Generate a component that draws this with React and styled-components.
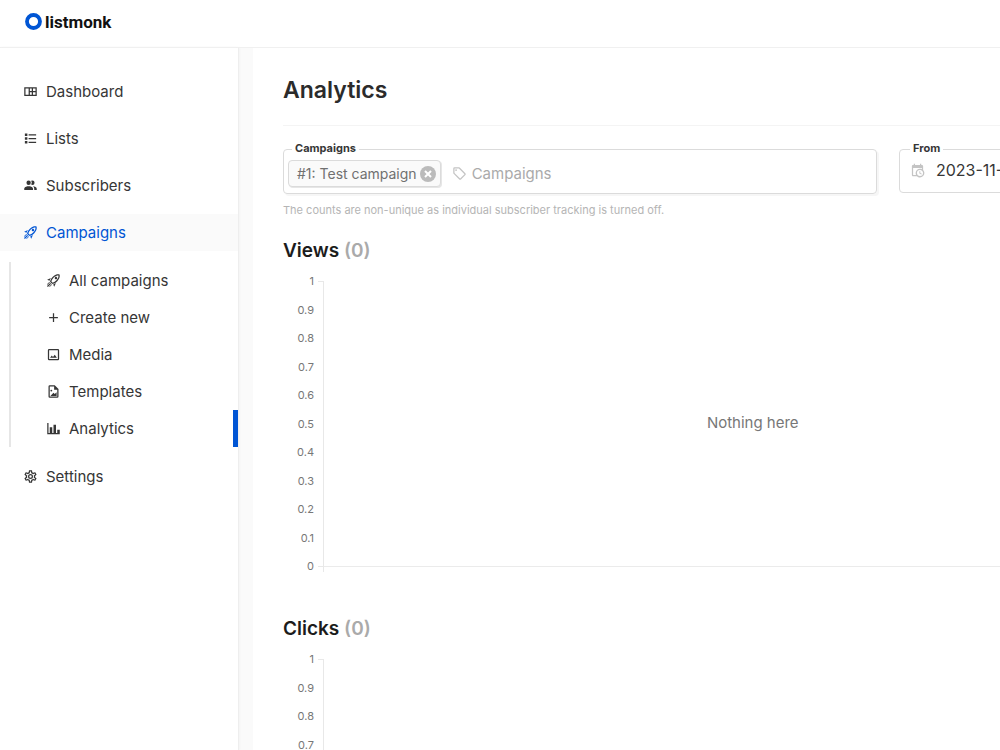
import styled, { createGlobalStyle, css } from "styled-components";

const icons = {
  dashboard:
    "M2 5V19H22V5H2M4 7H9V17H4V7M11 7H14V11H11V7M16 7H20V11H16V7M11 13H14V17H11V13M16 13H20V17H16V13Z",
  list: "M3,4H7V8H3V4M9,5V7H21V5H9M3,10H7V14H3V10M9,11V13H21V11H9M3,16H7V20H3V16M9,17V19H21V17H9",
  users:
    "M16 17V19H2V17S2 13 9 13 16 17 16 17M12.5 7.5A3.5 3.5 0 1 0 9 11A3.5 3.5 0 0 0 12.5 7.5M15.94 13A5.32 5.32 0 0 1 18 17V19H22V17S22 13.37 15.94 13M15 4A3.39 3.39 0 0 0 13.07 4.59A5 5 0 0 1 13.07 10.41A3.39 3.39 0 0 0 15 11A3.5 3.5 0 0 0 15 4Z",
  rocket:
    "M13.13 22.19L11.5 18.36C13.07 17.78 14.54 17 15.9 16.09L13.13 22.19M5.64 12.5L1.81 10.87L7.91 8.1C7 9.46 6.22 10.93 5.64 12.5M19.22 4C19.5 4 19.75 4 19.96 4.05C20.13 5.44 19.94 8.3 16.66 11.58C14.96 13.29 12.93 14.6 10.65 15.47L8.5 13.37C9.42 11.06 10.73 9.03 12.42 7.34C15.18 4.58 17.64 4 19.22 4M19.22 2C17.24 2 14.24 2.69 11 5.93C8.81 8.12 7.5 10.53 6.65 12.64C6.37 13.39 6.56 14.21 7.11 14.77L9.24 16.89C9.62 17.27 10.13 17.5 10.66 17.5C10.89 17.5 11.13 17.44 11.36 17.35C13.5 16.53 15.88 15.19 18.07 13C23.73 7.34 21.61 2.39 21.61 2.39S20.7 2 19.22 2M14.54 9.46C13.76 8.68 13.76 7.41 14.54 6.63S16.59 5.85 17.37 6.63C18.14 7.41 18.15 8.68 17.37 9.46C16.59 10.24 15.32 10.24 14.54 9.46M6.24 22L9.88 18.36C9.54 18.27 9.21 18.12 8.91 17.91L4.83 22H6.24M2 22H3.41L8.18 17.24L6.76 15.83L2 20.59V22M2 19.17L6.09 15.09C5.88 14.79 5.73 14.47 5.64 14.12L2 17.76V19.17Z",
  plus: "M19,13H13V19H11V13H5V11H11V5H13V11H19V13Z",
  image:
    "M19,19H5V5H19M19,3H5A2,2 0 0,0 3,5V19A2,2 0 0,0 5,21H19A2,2 0 0,0 21,19V5A2,2 0 0,0 19,3M13.96,12.29L11.21,15.83L9.25,13.47L6.5,17H17.5L13.96,12.29Z",
  file: "M14,2L20,8V20A2,2 0 0,1 18,22H6A2,2 0 0,1 4,20V4A2,2 0 0,1 6,2H14M18,20V9H13V4H6V20H18M17,13V19H7L12,14L14,16M10,10.5A1.5,1.5 0 0,1 8.5,12A1.5,1.5 0 0,1 7,10.5A1.5,1.5 0 0,1 8.5,9A1.5,1.5 0 0,1 10,10.5Z",
  chart: "M22,21H2V3H4V19H6V10H10V19H12V6H16V19H18V14H22V21Z",
  cog: "M12,8A4,4 0 0,1 16,12A4,4 0 0,1 12,16A4,4 0 0,1 8,12A4,4 0 0,1 12,8M12,10A2,2 0 0,0 10,12A2,2 0 0,0 12,14A2,2 0 0,0 14,12A2,2 0 0,0 12,10M10,22C9.75,22 9.54,21.82 9.5,21.58L9.13,18.93C8.5,18.68 7.96,18.34 7.44,17.94L4.95,18.95C4.73,19.03 4.46,18.95 4.34,18.73L2.34,15.27C2.21,15.05 2.27,14.78 2.46,14.63L4.57,12.97L4.5,12L4.57,11L2.46,9.37C2.27,9.22 2.21,8.95 2.34,8.73L4.34,5.27C4.46,5.05 4.73,4.96 4.95,5.05L7.44,6.05C7.96,5.66 8.5,5.32 9.13,5.07L9.5,2.42C9.54,2.18 9.75,2 10,2H14C14.25,2 14.46,2.18 14.5,2.42L14.87,5.07C15.5,5.32 16.04,5.66 16.56,6.05L19.05,5.05C19.27,4.96 19.54,5.05 19.66,5.27L21.66,8.73C21.79,8.95 21.73,9.22 21.54,9.37L19.43,11L19.5,12L19.43,13L21.54,14.63C21.73,14.78 21.79,15.05 21.66,15.27L19.66,18.73C19.54,18.95 19.27,19.04 19.05,18.95L16.56,17.95C16.04,18.34 15.5,18.68 14.87,18.93L14.5,21.58C14.46,21.82 14.25,22 14,22H10M11.25,4L10.88,6.61C9.68,6.86 8.62,7.5 7.85,8.39L5.44,7.35L4.69,8.65L6.8,10.2C6.4,11.37 6.4,12.64 6.8,13.8L4.68,15.36L5.43,16.66L7.86,15.62C8.63,16.5 9.68,17.14 10.87,17.38L11.24,20H12.76L13.13,17.39C14.32,17.14 15.37,16.5 16.14,15.62L18.57,16.66L19.32,15.36L17.2,13.81C17.6,12.64 17.6,11.37 17.2,10.2L19.31,8.65L18.56,7.35L16.15,8.39C15.38,7.5 14.32,6.86 13.12,6.62L12.75,4H11.25Z",
  tag: "M21.41 11.58L12.41 2.58A2 2 0 0 0 11 2H4A2 2 0 0 0 2 4V11A2 2 0 0 0 2.59 12.42L11.59 21.42A2 2 0 0 0 13 22A2 2 0 0 0 14.41 21.41L21.41 14.41A2 2 0 0 0 22 13A2 2 0 0 0 21.41 11.58M13 20L4 11V4H11L20 13M6.5 5A1.5 1.5 0 1 1 5 6.5A1.5 1.5 0 0 1 6.5 5Z",
  calendar:
    "M15,13H16.5V15.82L18.94,17.23L18.19,18.53L15,16.69V13M19,8H5V19H9.67C9.24,18.09 9,17.07 9,16A7,7 0 0,1 16,9C17.07,9 18.09,9.24 19,9.67V8M5,21C3.89,21 3,20.1 3,19V5C3,3.89 3.89,3 5,3H6V1H8V3H16V1H18V3H19A2,2 0 0,1 21,5V11.1C22.24,12.36 23,14.09 23,16A7,7 0 0,1 16,23C14.09,23 12.36,22.24 11.1,21H5M16,11.15A4.85,4.85 0 0,0 11.15,16C11.15,18.68 13.32,20.85 16,20.85A4.85,4.85 0 0,0 20.85,16C20.85,13.32 18.68,11.15 16,11.15Z",
};

const GlobalStyle = createGlobalStyle`
  * {
    box-sizing: border-box;
  }
  body {
    margin: 0;
    background: #fff;
    color: #363636;
    font-family: Inter, "Liberation Sans", sans-serif;
    font-size: 15px;
  }
`;

const Page = styled.div`
  height: 100vh;
  display: flex;
  flex-direction: column;
  overflow: hidden;
`;

const Header = styled.header`
  flex: none;
  height: 48px;
  padding: 0 25px 4px;
  display: flex;
  align-items: center;
  border-bottom: 1px solid #f0f0f0;
  box-shadow: 0 0 3px #eee;
`;

const Logo = styled.a`
  display: flex;
  align-items: center;
  gap: 3px;
  color: #111;
  font-family: Roboto, "Open Sans", sans-serif;
  font-size: 17px;
  font-weight: 700;
  line-height: 20px;
  text-decoration: none;
`;

const Body = styled.div`
  flex: 1;
  min-height: 0;
  display: flex;
  background: #fafafa;
`;

const Sidebar = styled.nav`
  flex: none;
  width: 239px;
  padding-top: 25px;
  background: #fff;
  border-right: 1px solid #eee;
  box-shadow: 0 0 3px #eee;
`;

const Menu = styled.ul`
  margin: 0;
  padding: 0;
  list-style: none;
  display: flex;
  flex-direction: column;
  gap: 10px;
`;

const SubMenu = styled.ul`
  margin: 11px 0 1px 9px;
  padding: 0;
  list-style: none;
  border-left: 2px solid #e6e6e6;
`;

const MenuLink = styled.a`
  height: 37px;
  padding: 0 23px;
  display: flex;
  align-items: center;
  gap: 8px;
  color: #363636;
  line-height: 20px;
  text-decoration: none;

  ${(p) =>
    p.$open &&
    css`
      color: #0055d4;
      background: #fafafa;
    `}
`;

const SubLink = styled(MenuLink)`
  padding: 0 35px;
  border-right: 5px solid ${(p) => (p.$current ? "#0055d4" : "transparent")};
`;

const Main = styled.main`
  flex: 1;
  min-width: 0;
  margin-left: 14px;
  padding: 26px 30px 0;
  background: #fff;
  overflow: auto;
  scrollbar-width: none;
`;

/* the report keeps its width and scrolls sideways in a narrow window */
const Report = styled.div`
  min-width: 1210px;
`;

const Title = styled.h1`
  margin: 0;
  padding-bottom: 19px;
  border-bottom: 1px solid #f4f4f4;
  color: #2b2b2b;
  font-size: 23px;
  font-weight: 600;
  line-height: 32px;
`;

const Filters = styled.form`
  margin-top: 15px;
  display: grid;
  grid-template-columns: 1fr 1fr;
  column-gap: 22px;
`;

const Field = styled.fieldset`
  min-width: 0;
  height: ${(p) => (p.$raised ? 53 : 52)}px;
  margin: 0;
  padding: 0 ${(p) => (p.$raised ? 4 : 10)}px;
  border: 1px solid #dbdbdb;
  border-radius: 4px;
  box-shadow: ${(p) => (p.$raised ? "2px 2px 0 #f6f6f6" : "none")};
`;

const Legend = styled.legend`
  margin-left: ${(p) => p.$indent}px;
  padding: 0 3px 2px;
  font-size: 11px;
  font-weight: 700;
  line-height: 14px;
`;

const FieldRow = styled.div`
  padding-top: 3px;
  display: flex;
  align-items: center;
  color: #c4c4c4;
`;

const Tag = styled.span`
  height: 27px;
  margin-right: 11px;
  padding: 0 4px 0 8px;
  display: flex;
  align-items: center;
  gap: 3px;
  border: 1px solid #dbdbdb;
  border-radius: 4px;
  background: #fafafa;
  box-shadow: 1px 1px 0 #e6e6e6;
  color: #707070;
  font-size: 14px;
`;

const TagClose = styled.button`
  width: 16px;
  height: 16px;
  padding: 0;
  border: 0;
  border-radius: 50%;
  display: flex;
  align-items: center;
  justify-content: center;
  background: #bbb;
  color: #fff;
  cursor: pointer;
`;

const TextInput = styled.input`
  flex: 1;
  min-width: 0;
  margin-left: 5px;
  padding: 0;
  border: 0;
  outline: 0;
  background: none;
  color: #363636;
  font: inherit;
  font-size: 15px;
  line-height: 20px;

  &::placeholder {
    color: #aaa;
    opacity: 1;
  }
`;

const DateInput = styled(TextInput)`
  margin-left: 11px;
  font-size: 16px;
`;

const Help = styled.p`
  margin: 8px 0 0;
  color: #b5b5b5;
  font-size: 11px;
  line-height: 16px;
`;

const Section = styled.section`
  margin-top: ${(p) => p.$top}px;
  display: grid;
  grid-template-columns: 3fr 1fr;
  column-gap: 12px;
`;

const SectionTitle = styled.h2`
  margin: 0;
  grid-column: 1 / -1;
  color: #1c1c1c;
  font-size: 19px;
  font-weight: 600;
  line-height: 28px;

  span {
    color: #aaa;
  }
`;

const Chart = styled.div`
  display: flex;
  margin-top: 9px;
`;

const Axis = styled.ol`
  width: 31px;
  margin: 0;
  padding: 0;
  list-style: none;
  display: flex;
  flex-direction: column;
  justify-content: space-between;
  height: 299px;
  color: #777;
  font-size: 11px;
  line-height: 14px;
  text-align: right;
`;

const Plot = styled.div`
  flex: 1;
  display: grid;
  grid-template-columns: 6px 1fr;
  grid-template-rows: 286px 5px;
  margin: 7px 0 7px 4px;
`;

const Ticks = styled.div`
  border: 1px solid #e8e8e8;
  border-left: 0;
`;

const Area = styled.div`
  padding-bottom: 2px;
  display: flex;
  align-items: center;
  justify-content: center;
  border-bottom: 1px solid #ebebeb;
  color: #777;
`;

const AxisEnd = styled.div`
  border-right: 1px solid #e8e8e8;
`;

const Icon = ({ name, size = 15 }) => (
  <svg width={size} height={size} viewBox="0 0 24 24" fill="currentColor" aria-hidden="true">
    <path d={icons[name]} fillRule={name === "dashboard" ? "evenodd" : "nonzero"} />
  </svg>
);

const campaignLinks = [
  { icon: "rocket", label: "All campaigns" },
  { icon: "plus", label: "Create new" },
  { icon: "image", label: "Media" },
  { icon: "file", label: "Templates" },
  { icon: "chart", label: "Analytics", current: true },
];

const links = [
  { icon: "dashboard", label: "Dashboard" },
  { icon: "list", label: "Lists" },
  { icon: "users", label: "Subscribers" },
  { icon: "rocket", label: "Campaigns", children: campaignLinks },
  { icon: "cog", label: "Settings" },
];

const steps = ["1", "0.9", "0.8", "0.7", "0.6", "0.5", "0.4", "0.3", "0.2", "0.1", "0"];

const EmptyChart = ({ title, note, top }) => (
  <Section $top={top}>
    <SectionTitle>
      {title} <span>(0)</span>
    </SectionTitle>
    <Chart>
      <Axis>
        {steps.map((s) => (
          <li key={s}>{s}</li>
        ))}
      </Axis>
      <Plot>
        <Ticks />
        <Area>{note}</Area>
        <AxisEnd />
      </Plot>
    </Chart>
  </Section>
);

const App = () => {
  return (
    <Page>
      <GlobalStyle />
      <Header>
        <Logo href="#">
          <svg width="17" height="17" viewBox="0 0 17 17" aria-hidden="true">
            <circle cx="8.5" cy="8.5" r="6.5" fill="none" stroke="#0055d4" strokeWidth="3.8" />
          </svg>
          listmonk
        </Logo>
      </Header>
      <Body>
        <Sidebar>
          <Menu>
            {links.map((link) => (
              <li key={link.label}>
                <MenuLink href="#" $open={!!link.children}>
                  <Icon name={link.icon} />
                  {link.label}
                </MenuLink>
                {link.children && (
                  <SubMenu>
                    {link.children.map((sub) => (
                      <li key={sub.label}>
                        <SubLink href="#" $current={sub.current}>
                          <Icon name={sub.icon} />
                          {sub.label}
                        </SubLink>
                      </li>
                    ))}
                  </SubMenu>
                )}
              </li>
            ))}
          </Menu>
        </Sidebar>
        <Main>
          <Report>
            <Title>Analytics</Title>
            <Filters>
              <div>
                <Field $raised>
                  <Legend $indent={4}>
                    <label htmlFor="campaigns">Campaigns</label>
                  </Legend>
                  <FieldRow>
                    <Tag>
                      #1: Test campaign
                      <TagClose type="button" aria-label="Remove">
                        <svg width="8" height="8" viewBox="0 0 8 8" aria-hidden="true">
                          <path d="M1 1L7 7M7 1L1 7" stroke="currentColor" strokeWidth="2" />
                        </svg>
                      </TagClose>
                    </Tag>
                    <Icon name="tag" />
                    <TextInput id="campaigns" placeholder="Campaigns" />
                  </FieldRow>
                </Field>
                <Help>The counts are non-unique as individual subscriber tracking is turned off.</Help>
              </div>
              <div>
                <Field>
                  <Legend $indent={0}>
                    <label htmlFor="from">From</label>
                  </Legend>
                  <FieldRow>
                    <Icon name="calendar" />
                    <DateInput id="from" defaultValue="2023-11-" />
                  </FieldRow>
                </Field>
              </div>
            </Filters>
            <EmptyChart title="Views" note="Nothing here" top={19} />
            <EmptyChart title="Clicks" top={36} />
          </Report>
        </Main>
      </Body>
    </Page>
  );
};

export default App;
